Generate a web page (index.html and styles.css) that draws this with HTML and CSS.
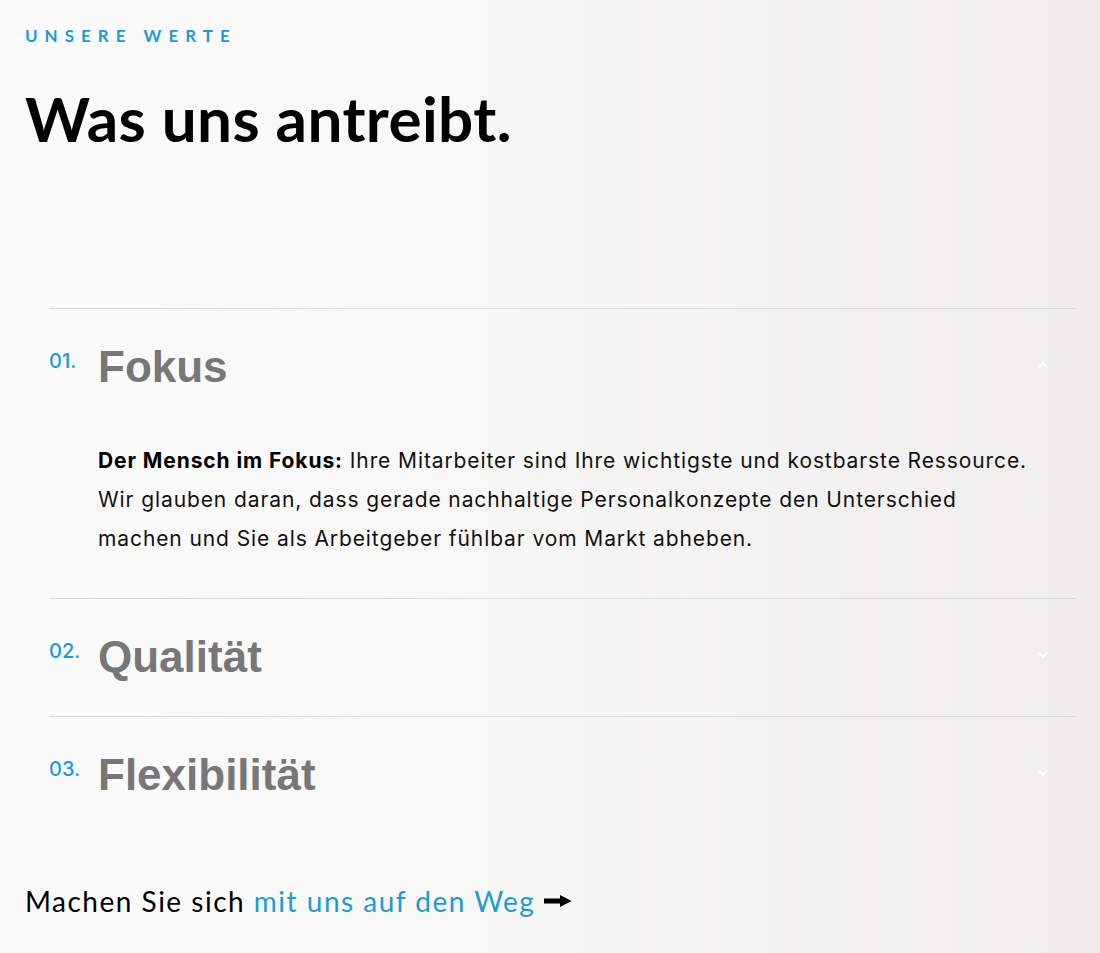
FILE: index.html
```html
<!DOCTYPE html>
<html lang="de">
<head>
<meta charset="utf-8">
<title>Unsere Werte</title>
<link rel="stylesheet" href="styles.css">
</head>
<body>
<main class="page">
  <p class="eyebrow">UNSERE WERTE</p>
  <h2 class="title">Was uns antreibt.</h2>

  <section class="accordion">
    <div class="item open">
      <div class="head">
        <span class="num">01.</span>
        <h3 class="name">Fokus</h3>
        <svg class="chev" width="10" height="6" viewBox="0 0 10 6"><path d="M1 5 L5 1.5 L9 5" fill="none" stroke="#fff" stroke-width="1.8"/></svg>
      </div>
      <div class="body">
        <p><strong>Der Mensch im Fokus:</strong> Ihre Mitarbeiter sind Ihre wichtigste und kostbarste Ressource. Wir glauben daran, dass gerade nachhaltige Personalkonzepte den Unterschied machen und Sie als Arbeitgeber fühlbar vom Markt abheben.</p>
      </div>
    </div>
    <div class="item">
      <div class="head">
        <span class="num">02.</span>
        <h3 class="name">Qualität</h3>
        <svg class="chev" width="10" height="6" viewBox="0 0 10 6"><path d="M1 1 L5 4.5 L9 1" fill="none" stroke="#fff" stroke-width="1.8"/></svg>
      </div>
    </div>
    <div class="item">
      <div class="head">
        <span class="num">03.</span>
        <h3 class="name">Flexibilität</h3>
        <svg class="chev" width="10" height="6" viewBox="0 0 10 6"><path d="M1 1 L5 4.5 L9 1" fill="none" stroke="#fff" stroke-width="1.8"/></svg>
      </div>
    </div>
  </section>

  <p class="cta">Machen Sie sich <a href="#">mit uns auf den Weg</a>
    <svg class="arrow" width="28" height="16" viewBox="0 0 28 16"><path d="M0 5.5 H16 V2 L27.5 8 L16 14 V10.5 H0 Z" fill="#000"/></svg>
  </p>
</main>
</body>
</html>
```

FILE: styles.css
```css
* { box-sizing: border-box; }

html, body {
  margin: 0;
  padding: 0;
}

body {
  background: linear-gradient(90deg, #fbfbfb 0%, #f7f7f6 45%, #efeeec 100%);
  color: #000;
  font-family: "Lato", "Liberation Sans", sans-serif;
  overflow: hidden;
}

.page {
  min-height: 953px;
  padding: 24px 24px 0 25px;
}

.eyebrow {
  margin: 0;
  font-family: "Lato", sans-serif;
  font-weight: 700;
  font-size: 17px;
  line-height: 24px;
  letter-spacing: 7px;
  color: #1b9bd7;
}

.title {
  margin: 32px 0 0;
  font-family: "Lato", sans-serif;
  font-weight: 700;
  font-size: 62px;
  line-height: 76px;
  letter-spacing: 0.4px;
  color: #000;
}

.accordion {
  margin: 152px 0 0 24px;
}

.item {
  border-top: 1px solid #d9d9d9;
}

.head {
  display: flex;
  align-items: flex-start;
  padding: 31px 0 33px;
}

.num {
  width: 49px;
  flex: none;
  margin-top: 9px;
  font-family: "Inter", sans-serif;
  font-weight: 500;
  font-size: 20px;
  line-height: 24px;
  color: #1b9bd7;
}

.name {
  flex: 1;
  margin: 0;
  font-family: "Liberation Sans", Arial, sans-serif;
  font-weight: 700;
  font-size: 44px;
  line-height: 53px;
  color: #777;
}

.chev {
  flex: none;
  margin: 22px 28px 0 0;
}

.body {
  padding: 15px 0 40px 49px;
}

.body p {
  margin: 0;
  max-width: 935px;
  font-family: "Inter", sans-serif;
  font-size: 21px;
  line-height: 39px;
  letter-spacing: 0.9px;
  color: #111;
}

.body strong {
  font-weight: 700;
  color: #000;
}

.cta {
  margin: 49px 0 0;
  font-family: "Lato", sans-serif;
  font-size: 28px;
  line-height: 36px;
  letter-spacing: 1.5px;
  color: #000;
}

.cta a {
  color: #1b9bd7;
  text-decoration: none;
}

.arrow {
  margin-left: 0;
  vertical-align: 3px;
}
```
